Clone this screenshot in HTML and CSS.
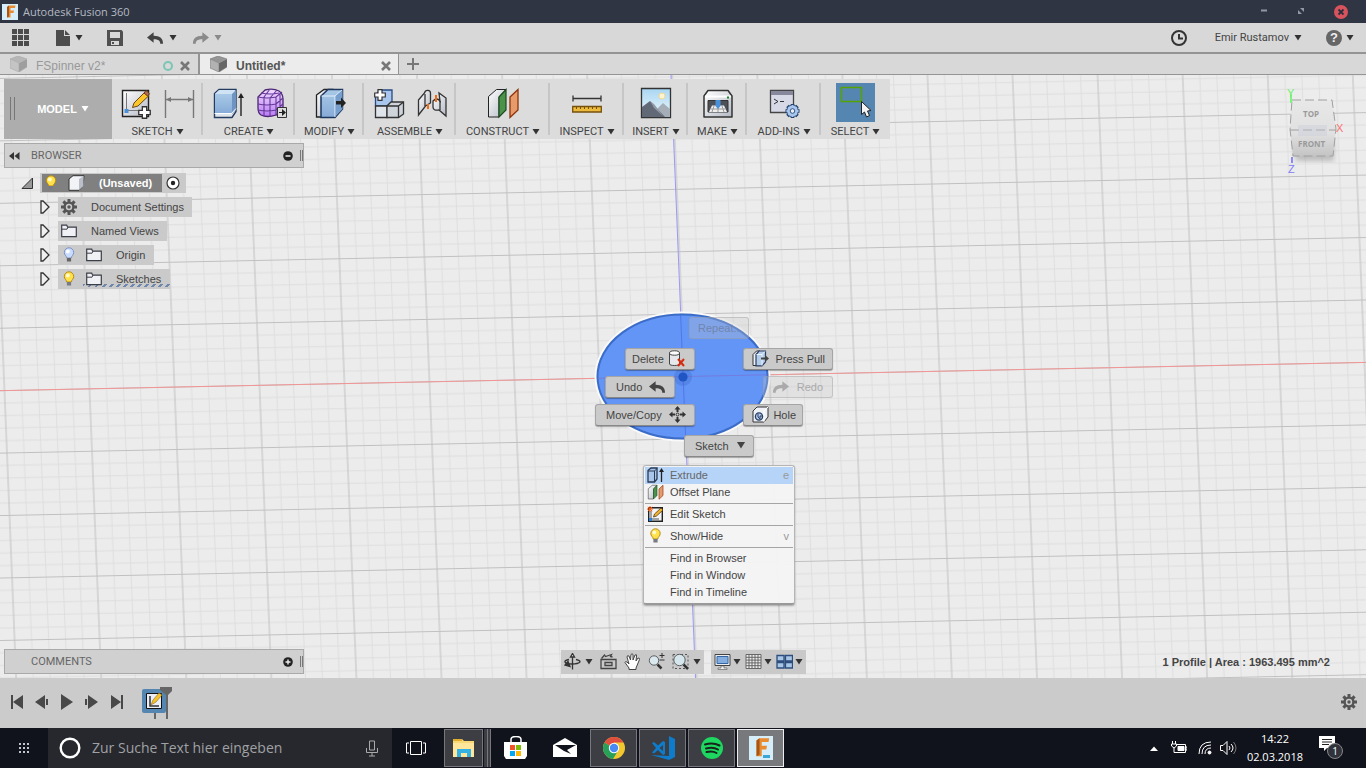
FILE: index.html
```
<!DOCTYPE html>
<html lang="en">
<head>
<meta charset="utf-8">
<title>Autodesk Fusion 360</title>
<link rel="stylesheet" href="styles.css">
</head>
<body>
<svg class="defs" aria-hidden="true">
  <defs>
    <linearGradient id="gBlue" x1="0" y1="0" x2="0" y2="1"><stop offset="0" stop-color="#a9c9e6"/><stop offset="1" stop-color="#86abd8"/></linearGradient>
    <linearGradient id="gGrey" x1="0" y1="0" x2="1" y2="1"><stop offset="0" stop-color="#ffffff"/><stop offset="1" stop-color="#b4b9c4"/></linearGradient>
    <linearGradient id="gPurple" x1="0" y1="0" x2="0" y2="1"><stop offset="0" stop-color="#f0dcff"/><stop offset="1" stop-color="#b87cf4"/></linearGradient>
    <linearGradient id="gSky" x1="0" y1="0" x2="0" y2="1"><stop offset="0" stop-color="#a9d6f2"/><stop offset="1" stop-color="#eef8fc"/></linearGradient>
    <linearGradient id="gCube" x1="0" y1="0" x2="0" y2="1"><stop offset="0" stop-color="#e8e8e8"/><stop offset=".6" stop-color="#e0e0e0"/><stop offset="1" stop-color="#c4c4c4"/></linearGradient>
    <filter id="soft"><feGaussianBlur stdDeviation="2.500"/></filter>
    <pattern id="grid" width="85" height="62.4" patternUnits="userSpaceOnUse" patternTransform="matrix(1 -0.0207 0.0406 1 640.7 271.2)">
      <path d="M8.5 0V62.4M25.5 0V62.4M59.5 0V62.4M76.5 0V62.4M0 6.2H85M0 18.7H85M0 43.7H85M0 56.2H85" stroke="#dedede" fill="none"/>
      <path d="M42.5 0V62.4M0 31.2H85" stroke="#c0c0c0" fill="none"/>
    </pattern>
    <symbol id="bulb" viewBox="0 0 12 16"><path d="M6 .8a4.7 4.7 0 0 0-4.700 4.700c0 2.500 2.200 3.300 2.500 5.500h4.400c.3-2.200 2.500-3 2.500-5.500A4.700 4.700 0 0 0 6 .8z" fill="#ffe14a" stroke="#b98a16"/><circle cx="4.800" cy="4.500" r="1.900" fill="#fffbd0"/><path d="M3.900 11h4.200v3.500H3.900z" fill="#777b84"/></symbol>
    <symbol id="bulbOff" viewBox="0 0 12 16"><path d="M6 .8a4.700 4.700 0 0 0-4.700 4.700c0 2.500 2.200 3.300 2.500 5.500h4.400c.3-2.200 2.500-3 2.500-5.500A4.700 4.700 0 0 0 6 .8z" fill="#c9dcff" stroke="#7c92bd"/><circle cx="4.800" cy="4.500" r="1.900" fill="#fff"/><path d="M3.900 11h4.200v3.500H3.900z" fill="#666"/></symbol>
    <symbol id="folder" viewBox="0 0 16 14"><path d="M.7 1.200h5l1 2h8.600v9.500H.7z" fill="#f0f1f4" stroke="#3b3f48" stroke-width="1.200"/><path d="M1 5.200h5l1-2" fill="none" stroke="#3b3f48"/></symbol>
    <symbol id="expand" viewBox="0 0 10 14"><path d="M1 1h2l6 6-6 6H1z" fill="#f0f0f0" stroke="#333" stroke-width="1.300"/></symbol>
    <symbol id="gear" viewBox="0 0 16 16"><g stroke="currentColor" stroke-width="3"><path d="M8 0v16M0 8h16M2.400 2.400l11.200 11.200M13.600 2.400L2.400 13.600"/></g><circle cx="8" cy="8" r="5.600" fill="currentColor"/><circle cx="8" cy="8" r="3.200" fill="#ccc"/><circle cx="8" cy="8" r="1.700" fill="currentColor"/></symbol>
    <symbol id="undo" viewBox="0 0 18 12"><path d="M0 5.500L7 0v3.600c7 0 10 3 10 8.400h-3c0-3-2-4.600-7-4.600V11z" fill="currentColor"/></symbol>
    <symbol id="redo" viewBox="0 0 18 12"><path d="M18 5.500L11 0v3.600c-7 0-10 3-10 8.400h3c0-3 2-4.600 7-4.600V11z" fill="currentColor"/></symbol>
    <symbol id="down" viewBox="0 0 8 6"><path d="M.5 0h7L4 5.500z" fill="currentColor"/></symbol>
    <symbol id="cube" viewBox="0 0 17 16"><path d="M0 3L8 0l9 3-8 4z" fill="#959595"/><path d="M0 3l9 4v9l-9-4z" fill="#b2b2b2"/><path d="M17 3L9 7v9l8-5z" fill="#666"/><path d="M0 3l9 4v9l-9-4zM0 3L8 0l9 3v8l-8 5" fill="none" stroke="#777" stroke-width=".6"/></symbol>
    <symbol id="close" viewBox="0 0 10 10"><path d="M1 1l8 8M9 1L1 9" stroke="currentColor" stroke-width="2.600"/></symbol>
    <symbol id="extrude" viewBox="0 0 32 32"><path d="M2.500 6.500L7 2.500h17v22l-4 6H2.500z" fill="#dfe3ea" stroke="#243c60" stroke-width="1.400"/><path d="M3 7h17v19H3z" fill="url(#gBlue)"/><path d="M3 7l4-4h16.500L20 7z" fill="#cfe3f5"/><path d="M20 7l4-4v20l-4 4z" fill="#6f94c4"/><path d="M2.500 26.500h17l4.500-5" fill="none" stroke="#fff"/><path d="M29 29V8" stroke="#222" stroke-width="1.400"/><path d="M26 11l3-5 3 5z" fill="#222"/></symbol>
    <symbol id="extrudeSmall" viewBox="0 0 17 16"><path d="M1 3.500L4 1h6v11l-2.500 3H1z" fill="#a9c6ea" stroke="#2a3a55" stroke-width="1.300"/><path d="M1 4h6.500v11M7.500 4L10 1.500" fill="none" stroke="#2a3a55"/><path d="M14.500 15V3" stroke="#222" stroke-width="1.300"/><path d="M12 5l2.500-4L17 5z" fill="#222"/></symbol>
    <symbol id="pressSmall" viewBox="0 0 17 17"><path d="M1 4.500L4.500 1H8L4.500 4.500v11H1z" fill="#eef1f5" stroke="#333"/><path d="M4 4.500L7 1h6.500v11L10 15.800H4z" fill="#b4cdeb" stroke="#2a3f62" stroke-width="1.200"/><path d="M4.500 4.500H10v11M10 4.500L13 1.500" fill="none" stroke="#eef5fc"/><path d="M9 7.500h4V5l4 3.500-4 3.500V9.500H9z" fill="#444"/></symbol>
    <symbol id="construct" viewBox="0 0 32 32"><path d="M1.500 9.500l8-7H19L12 10v20H1.500z" fill="url(#gGrey)" stroke="#222"/><path d="M12 10l7-7.500V23l-7 7z" fill="#4b934b" stroke="#1d4a22" stroke-width="1.200"/><path d="M23 10l8-7.500V23l-8 7.500z" fill="#e79a6b" stroke="#8d3309" stroke-width="1.300"/></symbol>
    <symbol id="sketch" viewBox="0 0 32 32"><path d="M2.500 3.500h26v26h-26z" fill="url(#gGrey)" stroke="#222" stroke-width="1.400"/><path d="M6.500 6v17.500H23" fill="none" stroke="#777"/><path d="M4.500 22h4v4h-4z" fill="#4a90d9"/><path d="M14 16L25 5l4 3.500L18 19l-5.500 1.500z" fill="#ffc629" stroke="#68471b"/><path d="M24 6l2-2.500 3.500 3.200-2 2.300z" fill="#b66c50" stroke="#613820"/></symbol>
    <symbol id="press" viewBox="0 0 32 32"><path d="M2.500 8L10 2.500h8L12 8v22H2.500z" fill="url(#gGrey)" stroke="#222" stroke-width="1.300"/><path d="M7 9l7-6.500h14.500V22L21 30.500H7z" fill="url(#gBlue)" stroke="#1d365e" stroke-width="1.500"/><path d="M7.500 9H21l7-6M21 9v21" stroke="#e4f1fb" fill="none"/><path d="M21.500 9l7-6v19l-7 7.500z" fill="#769fce"/></symbol>
    <symbol id="plus" viewBox="0 0 12 12"><path d="M4 .7h4V4h3.300v4H8v3.300H4V8H.7V4H4z" fill="#fff" stroke="#333" stroke-width="1.200"/></symbol>
    <symbol id="fusion" viewBox="0 0 16 16"><path d="M0 0h16v16H0z" fill="#d5eefa"/><path d="M5 3l2-1.500h6.500L13 4H8.500v2.500H12L11.500 9h-3v4.500H5z" fill="#e98b2e"/><path d="M5 3l2-1.500v11l-2 1z" fill="#a65717"/></symbol>
  </defs>
</svg>

<header class="titlebar">
  <svg class="logo"><use href="#fusion"/></svg>
  <h1>Autodesk Fusion 360</h1>
  <div class="window-controls">
    <button aria-label="Minimize"><svg width="8" height="12"><path d="M1 4.500h6" stroke="#9298a5" stroke-width="2"/></svg></button>
    <button aria-label="Restore"><svg width="8" height="12"><path d="M3 2h4v4zM1 4v4h4z" fill="#9298a5"/></svg></button>
    <button aria-label="Close"><svg width="14" height="14"><circle cx="7" cy="7" r="7" fill="#d9535c"/><path d="M4.500 4.500l5 5M9.500 4.500l-5 5" stroke="#2b3040" stroke-width="1.800"/></svg></button>
  </div>
</header>

<div class="quickbar">
  <button class="q-grid" aria-label="Data panel"><svg width="18" height="18" fill="#4c4c4c"><path d="M0 0h5v5H0zM6 0h5v5H6zM12 0h5v5h-5zM0 6h5v5H0zM6 6h5v5H6zM12 6h5v5h-5zM0 12h5v5H0zM6 12h5v5H6zM12 12h5v5h-5z"/></svg></button>
  <button class="q-file" aria-label="File"><svg width="14" height="16" fill="#4c4c4c"><path d="M0 0h8v6h6v10H0zM9 0l5 5H9z"/></svg><svg class="caret"><use href="#down"/></svg></button>
  <button class="q-save" aria-label="Save"><svg width="16" height="16"><path d="M0 0h14.500L16 1.500V16H0z" fill="#505050"/><path d="M3 2h10v6H3z" fill="#d8d8d8"/><path d="M4 11h8v4H4z" fill="#d8d8d8"/><path d="M5 12h2v2H5z" fill="#505050"/></svg></button>
  <button class="q-undo" aria-label="Undo"><svg width="17" height="12"><use href="#undo"/></svg><svg class="caret"><use href="#down"/></svg></button>
  <button class="q-redo" aria-label="Redo"><svg width="17" height="12"><use href="#redo"/></svg><svg class="caret"><use href="#down"/></svg></button>
  <div class="account">
    <button aria-label="Job status"><svg width="16" height="16" fill="none" stroke="#333" stroke-width="2"><circle cx="8" cy="8" r="7"/><path d="M8 4v4.500h4"/></svg></button>
    <button class="user">Emir Rustamov <svg class="caret"><use href="#down"/></svg></button>
    <button class="help" aria-label="Help"><span>?</span><svg class="caret"><use href="#down"/></svg></button>
  </div>
</div>

<nav class="tabs" aria-label="Documents">
  <div class="tab"><svg class="tab-cube faded"><use href="#cube"/></svg><a href="#">FSpinner v2*</a><i class="sync"></i><button aria-label="Close FSpinner"><svg width="10" height="10"><use href="#close"/></svg></button></div>
  <div class="tab active"><svg class="tab-cube"><use href="#cube"/></svg><a href="#">Untitled*</a><button aria-label="Close Untitled"><svg width="10" height="10"><use href="#close"/></svg></button></div>
  <button class="new-tab" aria-label="New tab"><svg width="12" height="12"><path d="M6 0v12M0 6h12" stroke="#777" stroke-width="2"/></svg></button>
</nav>

<main class="viewport">
  <svg class="canvas" viewBox="0 0 1366 603" preserveAspectRatio="xMidYMid slice" aria-hidden="true">
    <rect width="1366" height="603" fill="#ececec"/>
    <rect width="1366" height="603" fill="url(#grid)"/>
    <path d="M0 315.700L1366 287.400" stroke="#f29595"/>
    <path d="M671 0l24.500 603" stroke="#9b99f4"/>
    <ellipse cx="682.500" cy="301.500" rx="87" ry="64" fill="none" stroke="#fafafa" stroke-width="2"/>
    <ellipse cx="682.500" cy="301.500" rx="85" ry="62" fill="#5c90f7" stroke="#3a6cc8" stroke-width="2" fill-opacity=".95"/>
    <path d="M598 303.300l169-3.500" stroke="#7775d9" stroke-opacity=".7"/><path d="M680.600 240l5 123" stroke="#4d63e6" stroke-opacity=".6"/>
    <circle cx="683" cy="302" r="9" fill="#3b68cc" opacity=".35"/><circle cx="683" cy="302" r="4.600" fill="#2056c4"/>
  </svg>

  <div class="ribbon">
    <button class="workspace">MODEL <svg class="caret"><use href="#down"/></svg></button>
    <section class="group">
      <div class="tools">
        <button aria-label="Create sketch"><svg class="tool"><use href="#sketch"/><use href="#plus" x="18" y="19" width="13" height="13"/></svg></button>
        <button aria-label="Dimension"><svg class="tool" fill="none" stroke="#777"><path d="M2.500 3v28M30.500 3v28M3 12.500h27" stroke-width="1.400"/><path d="M3 12.500l5-2.500v5zM30 12.500L25 10v5z" fill="#777" stroke="none"/></svg></button>
      </div>
      <button class="label">SKETCH <svg class="caret"><use href="#down"/></svg></button>
    </section>
    <section class="group">
      <div class="tools">
        <button aria-label="Extrude"><svg class="tool"><use href="#extrude"/></svg></button>
        <button aria-label="Create form"><svg class="tool"><path d="M3 10l7-7q8-2 14 1 4 3 4 8v10l-7 6q-9 3-15 0-3-2-3-7z" fill="url(#gPurple)" stroke="#4c2672" stroke-width="1.300"/><path d="M3 10q9 2 18 0l6-5M21 10v19M9 10v19M15 11v19M3 17q9 2 18 0l7-6M3 23q9 2 18 0l7-6M9 10l6-8M15 11l7-8M6 6q9 2 18 0M25 7v18" fill="none" stroke="#653799" stroke-width="1.100"/><path d="M22.500 20.500h9v10h-9z" fill="#ddd" stroke="#333"/><path d="M24 25h3v-3l4 3.500-4 3.500v-3h-3z" fill="#222"/></svg></button>
      </div>
      <button class="label">CREATE <svg class="caret"><use href="#down"/></svg></button>
    </section>
    <section class="group">
      <div class="tools"><button aria-label="Press pull"><svg class="tool"><use href="#press"/><path d="M22 14h5v-3.500l5 5.500-5 5v-3.500h-5z" fill="#222"/></svg></button></div>
      <button class="label">MODIFY <svg class="caret"><use href="#down"/></svg></button>
    </section>
    <section class="group">
      <div class="tools">
        <button aria-label="New component"><svg class="tool" stroke="#333" stroke-width="1.300"><path d="M2.500 8L7 3h12v12l-5 4H2.500z" fill="#a9c6ee" stroke="#274a83"/><path d="M2.500 19H14v11.500H2.500z" fill="#dfe3ea"/><path d="M14 19l4-4h12.500v12l-5 3.500H14z" fill="#cfd3da"/><path d="M14 19h11.500v11.500M25.500 19l5-4" fill="none"/><use href="#plus" x="1" y="2" width="12" height="12"/></svg></button>
        <button aria-label="Joint"><svg class="tool" stroke="#333" stroke-width="1.300"><path d="M2.500 13l6-7c1-4 6-3 6 0v10l-5 3-7 9z" fill="url(#gGrey)"/><path d="M9 7v12" fill="none"/><path d="M12 17v5" stroke="#f06b12" stroke-width="2"/><path d="M17 14q4-4 7 0l-1-8 7 5v18l-7-6q-6 1-6-3z" fill="url(#gGrey)"/><path d="M24 14v9" fill="none"/><path d="M20 8v7" stroke="#f06b12" stroke-width="2"/></svg></button>
      </div>
      <button class="label">ASSEMBLE <svg class="caret"><use href="#down"/></svg></button>
    </section>
    <section class="group">
      <div class="tools"><button aria-label="Offset plane"><svg class="tool"><use href="#construct"/></svg></button></div>
      <button class="label">CONSTRUCT <svg class="caret"><use href="#down"/></svg></button>
    </section>
    <section class="group">
      <div class="tools"><button aria-label="Measure"><svg class="tool"><path d="M2 11.500h28M2 8.500v6M30 8.500v6" stroke="#333" stroke-width="1.300"/><path d="M1.700 19.500h28.600v5.500H1.700z" fill="#edbb3c" stroke="#76500d" stroke-width="1.300"/><path d="M5.500 20v2M9.500 20v2M13.500 20v2M17.500 20v2M21.500 20v2M25.500 20v2" stroke="#76500d"/></svg></button></div>
      <button class="label">INSPECT <svg class="caret"><use href="#down"/></svg></button>
    </section>
    <section class="group">
      <div class="tools"><button aria-label="Insert image"><svg class="tool"><path d="M1.500 1.500h29v29h-29z" fill="url(#gSky)" stroke="#333" stroke-width="1.300"/><circle cx="22" cy="9" r="3" fill="#fff4cb" stroke="#f3d794"/><path d="M15 24l8-8 7 6v8H15z" fill="#a5adb7"/><path d="M2 20l8-6 15 16H2z" fill="#626976"/><path d="M10 14l4 7 9 8-9-12z" fill="#929aa6"/></svg></button></div>
      <button class="label">INSERT <svg class="caret"><use href="#down"/></svg></button>
    </section>
    <section class="group">
      <div class="tools"><button aria-label="3D print"><svg class="tool"><path d="M2 9l4-5.500h20L30 9v21H2z" fill="url(#gGrey)" stroke="#333" stroke-width="1.500" stroke-linejoin="round"/><path d="M3 9.500h26" stroke="#fff" stroke-width="2"/><path d="M6 13.500h20V25H6z" fill="#4c5058" stroke="#333"/><path d="M10 18.500h12l3 6.500H7z" fill="#eee"/><path d="M12 19l-2 6M16 19v6M20 19l2 6M8.500 22h15" stroke="#999"/><path d="M13.500 13h5v6L16 22l-2.500-3z" fill="#4a90d9"/><path d="M25 9.500h2v2h-2z" fill="#188a25"/></svg></button></div>
      <button class="label">MAKE <svg class="caret"><use href="#down"/></svg></button>
    </section>
    <section class="group">
      <div class="tools"><button aria-label="Scripts"><svg class="tool"><path d="M2.500 3.500h23v22h-23z" fill="#d7dae6" stroke="#444" stroke-width="1.300"/><path d="M3 4h22v4H3z" fill="#88889c"/><path d="M6 12l4 2.500L6 17M12 14.500h4" stroke="#333" fill="none"/><g transform="translate(24.500 24)"><path d="M0-7V7M-7 0H7M-5-5L5 5M5-5L-5 5" stroke="#233e67" stroke-width="3.600"/><circle r="5.800" fill="#a9c6ee" stroke="#315687"/><path d="M0-6V6M-6 0H6M-4-4L4 4M4-4L-4 4" stroke="#a9c6ee" stroke-width="2"/><circle r="2.300" fill="#eee" stroke="#315687"/></g></svg></button></div>
      <button class="label">ADD-INS <svg class="caret"><use href="#down"/></svg></button>
    </section>
    <section class="group">
      <div class="tools"><button class="selected" aria-label="Select"><svg width="39" height="39"><path d="M5.500 4.500h20v14h-20z" fill="none" stroke="#56a200" stroke-width="1.600"/><path d="M25.500 18.500v13l3-2.500 2 5 3-1.500-2-4.500 3.500-.5z" fill="#f4f4f4" stroke="#222"/></svg></button></div>
      <button class="label">SELECT <svg class="caret"><use href="#down"/></svg></button>
    </section>
  </div>

  <div class="middle">
    <aside class="browser">
      <div class="panel-head">
        <button aria-label="Collapse browser"><svg width="11" height="8" fill="#333"><path d="M5 0v8L0 4zM10.500 0v8l-5-4z"/></svg></button>
        <h2>BROWSER</h2>
        <button aria-label="Minimize browser"><svg width="10" height="10"><circle cx="5" cy="5" r="4.800" fill="#222"/><path d="M2.500 5h5" stroke="#eee" stroke-width="1.500"/></svg></button><i class="grip"></i>
      </div>
      <ul class="tree">
        <li class="root"><svg width="12" height="12"><path d="M1 11.500h10.500V1z" fill="#999" stroke="#333"/></svg><div class="node"><span class="name"><svg width="12" height="16"><use href="#bulb"/></svg><svg width="17" height="16"><path d="M1 4l4-3.300h11L15 11l-4 4.300H1z" fill="#f1f3f7" stroke="#333"/><path d="M11 4l4.500-3v10L11 15z" fill="#b9bec9"/></svg><b>(Unsaved)</b></span><svg width="14" height="14"><circle cx="7" cy="7" r="6" fill="#fff" stroke="#333" stroke-width="1.200"/><circle cx="7" cy="7" r="2.200" fill="#222"/></svg></div></li>
        <li><svg width="10" height="14"><use href="#expand"/></svg><div class="node"><svg class="dark" width="16" height="16"><use href="#gear"/></svg><span>Document Settings</span></div></li>
        <li><svg width="10" height="14"><use href="#expand"/></svg><div class="node"><svg width="16" height="14"><use href="#folder"/></svg><span>Named Views</span></div></li>
        <li class="lit"><svg width="10" height="14"><use href="#expand"/></svg><div class="node"><svg width="12" height="16"><use href="#bulbOff"/></svg><svg width="16" height="14"><use href="#folder"/></svg><span>Origin</span></div></li>
        <li class="lit"><svg width="10" height="14"><use href="#expand"/></svg><div class="node hatched"><svg width="12" height="16"><use href="#bulb"/></svg><svg width="16" height="14"><use href="#folder"/></svg><span>Sketches</span></div></li>
      </ul>
    </aside>
  </div>

  <svg class="viewcube" width="70" height="96" role="img" aria-label="View cube">
    <path d="M20 66l40-8v20H22z" fill="#777" opacity=".4" filter="url(#soft)"/>
    <path d="M18 17h40l4 29-3 27H19l-3-27z" fill="url(#gCube)"/>
    <path d="M18 17h40l4 29-3 27H19l-3-27zM16 47h46" fill="none" stroke="#a0a0a0" stroke-dasharray="9 4"/>
    <path d="M24 42h29v11H24z" fill="#c3c9d8" opacity=".35"/>
    <text x="29" y="34" class="face">TOP</text><text x="24" y="64" class="face">FRONT</text>
    <path d="M17 11v9" stroke="#7bf57b" stroke-width="2"/><path d="M18 74v6" stroke="#8a8af5" stroke-width="2"/>
    <text x="13" y="14" class="axis y">Y</text><text x="62" y="49" class="axis x">X</text><text x="14" y="90" class="axis z">Z</text>
  </svg>

  <div class="marking">
    <button class="mark repeat" disabled>Repeat...</button>
    <button class="mark delete">Delete <svg width="18" height="17"><path d="M1.500 3v11c0 2 10 2 10 0V3" fill="#e6e8ec" stroke="#444"/><ellipse cx="6.500" cy="3" rx="5" ry="2.200" fill="#fff" stroke="#444"/><path d="M10 9l6 7M16 9l-6 7" stroke="#d42c10" stroke-width="2"/></svg></button>
    <button class="mark undo">Undo <svg width="17" height="12"><use href="#undo"/></svg></button>
    <button class="mark move">Move/Copy <svg width="17" height="17" fill="#333"><path d="M8.500 0l3 3.500h-2V6h-2V3.500h-2zM8.500 17l3-3.500h-2V11h-2v2.500h-2zM0 8.500l3.500-3v2H6v2H3.500v2zM17 8.500l-3.500-3v2H11v2h2.500v2z"/><circle cx="8.500" cy="8.500" r="1.500" fill="#ccc" stroke="#333"/></svg></button>
    <button class="mark press"><svg width="17" height="17"><use href="#pressSmall"/></svg> Press Pull</button>
    <button class="mark redo" disabled><svg width="17" height="12"><use href="#redo"/></svg> Redo</button>
    <button class="mark hole"><svg width="17" height="17"><path d="M1 5l4-4h11v10l-4 5H1z" fill="#eef1f6" stroke="#333"/><path d="M12 5l4-4M12 5v11" stroke="#fff"/><circle cx="7" cy="10.500" r="3.600" fill="#b7c8e6" stroke="#263f67" stroke-width="1.300"/><path d="M6 8v3l2 2v-3h2" fill="none" stroke="#263f67"/></svg> Hole</button>
    <button class="mark sketch">Sketch <svg width="10" height="7"><use href="#down"/></svg></button>
    <ul class="context">
      <li class="hover"><button><svg width="17" height="16"><use href="#extrudeSmall"/></svg><span>Extrude</span><kbd>e</kbd></button></li>
      <li><button><svg width="17" height="16"><use href="#construct"/></svg><span>Offset Plane</span></button></li>
      <li class="rule"><button><svg width="17" height="16"><path d="M1.700 1.700h13.600v13.600H1.700z" fill="#f4f4f6" stroke="#222" stroke-width="1.400"/><path d="M4 5v8h8" fill="none" stroke="#555"/><path d="M2 12h3v3H2z" fill="#2f7ed8"/><path d="M6.500 11l1-3L14 2l2 2-6.500 6z" fill="#f3b32b" stroke="#4d3717" stroke-width=".8"/><path d="M0 3h6M3 0v6M.8.8l4.400 4.400M5.200.8L.8 5.200" stroke="#f25a14"/></svg><span>Edit Sketch</span></button></li>
      <li class="rule"><button><svg width="17" height="16"><use href="#bulb"/></svg><span>Show/Hide</span><kbd>v</kbd></button></li>
      <li class="rule"><button><i></i><span>Find in Browser</span></button></li>
      <li><button><i></i><span>Find in Window</span></button></li>
      <li><button><i></i><span>Find in Timeline</span></button></li>
    </ul>
  </div>

  <div class="bottom">
    <div class="panel-head comments">
      <h2>COMMENTS</h2>
      <button aria-label="Expand comments"><svg width="10" height="10"><circle cx="5" cy="5" r="4.800" fill="#222"/><path d="M2.500 5h5M5 2.500v5" stroke="#eee" stroke-width="1.400"/></svg></button><i class="grip"></i>
    </div>
    <div class="navbars">
      <div class="navbar">
        <button aria-label="Orbit"><svg width="17" height="17" fill="none" stroke="#333" stroke-width="1.300"><path d="M8.500 16.500V4"/><path d="M6.500 4l2-3.500 2 3.500z" fill="#eee"/><path d="M5 6.500C-1.500 7.500 0 11 8 11s11-3 4-4.500"/><path d="M4 8.500L1 12l5 1.500z" fill="#333"/></svg><svg class="caret"><use href="#down"/></svg></button>
        <button aria-label="Look at"><svg width="17" height="17" fill="none" stroke="#444" stroke-width="1.300"><path d="M1 6.500h15v9H1zM5 9.500h7v3H5z"/><path d="M1.500 5.500l3-3.500 1 1.500 6-2-1 2 2 .5"/></svg></button>
        <button aria-label="Pan"><svg width="17" height="17"><path d="M5 15L1 9.500q0-1.500 2-.5l2 2L3 4q0-2 2-1l1.500 4L7 1.500q1-1.500 2 0V7l2-5q2-1 1.500 1L12 8l2-3q2 0 1.500 1.500L12 15v1.500H5z" fill="#fff" stroke="#444"/></svg></button>
        <button aria-label="Zoom"><svg width="17" height="17"><circle cx="6" cy="7.500" r="4.700" fill="#d9e9ee" stroke="#5b5f63"/><path d="M9.500 11.500l4 4" stroke="#333" stroke-width="2.500"/><path d="M14 0v5M11.500 2.500h5M11.500 7h5" stroke="#333"/></svg></button>
        <button aria-label="Fit"><svg width="17" height="17"><path d="M1 1.500h15v14H1z" fill="none" stroke="#555" stroke-dasharray="2 2"/><circle cx="7.500" cy="7" r="5.700" fill="#d5e7ec" stroke="#5b5f63"/><path d="M11.500 11.500l4.500 4.500" stroke="#333" stroke-width="2.500"/></svg><svg class="caret"><use href="#down"/></svg></button>
      </div>
      <div class="navbar display">
        <button aria-label="Display settings"><svg width="17" height="17"><path d="M1 1.500h15v11H1z" fill="#eee" stroke="#444"/><path d="M3 3.500h11v7H3z" fill="#85ade0" stroke="#3266a5"/><path d="M7 13h3v2h3v1.500H4V15h3z" fill="#eee" stroke="#555" stroke-width=".6"/></svg><svg class="caret"><use href="#down"/></svg></button>
        <button aria-label="Grid settings"><svg width="17" height="17" stroke="#666" fill="#eee"><path d="M1 1.500h15v14H1z"/><path d="M4 1v15M7 1v15M10 1v15M13 1v15M1 4.300h15M1 7.100h15M1 9.900h15M1 12.700h15"/></svg><svg class="caret"><use href="#down"/></svg></button>
        <button aria-label="Viewports"><svg width="17" height="17" fill="#a8c6e6" stroke="#2d4d7c" stroke-width="1.300"><path d="M1 2.500h7v5.500H1zM9.500 2.500h7v5.500h-7zM1 9.500h7V15H1zM9.500 9.500h7V15h-7z"/></svg><svg class="caret"><use href="#down"/></svg></button>
      </div>
    </div>
    <p class="status">1 Profile | Area : 1963.495 mm^2</p>
  </div>
</main>

<footer class="timeline">
  <div class="playback">
    <button aria-label="First"><svg width="14" height="16"><path d="M1 1h2v14H1zM13 1v14L3 8z"/></svg></button>
    <button aria-label="Previous"><svg width="14" height="16"><path d="M10 1v14L0 8zM11 5h2v6h-2z"/></svg></button>
    <button aria-label="Play"><svg width="14" height="16"><path d="M1 0l12 8-12 8z"/></svg></button>
    <button aria-label="Next"><svg width="14" height="16"><path d="M3 1v14l10-7zM0 5h2v6H0z"/></svg></button>
    <button aria-label="Last"><svg width="14" height="16"><path d="M11 1h2v14h-2zM1 1v14l10-7z"/></svg></button>
  </div>
  <button class="feature" aria-label="Sketch1"><svg width="32" height="34"><rect y="3" width="24" height="24" rx="2" fill="#5486b1"/><path d="M4.500 7.500h15v15h-15z" fill="#e9eef8" stroke="#111"/><path d="M8 10v10h9" fill="none" stroke="#333" stroke-width="1.500"/><path d="M9 19l2-5 6-7 3 2-6 7z" fill="#f5c12c" stroke="#8a681b" stroke-width=".6"/><path d="M12 27h2v6h-2z" fill="#666"/><path d="M18 1h12v4l-4 4v24h-2V9l-6-5z" fill="#666"/></svg></button>
  <button class="settings" aria-label="Settings"><svg width="16" height="16"><use href="#gear"/></svg></button>
</footer>

<footer class="taskbar">
  <button class="start" aria-label="Start"><svg width="11" height="11" fill="#c2c4c9"><path d="M0 0h2v2H0zM4 0h2v2H4zM8 0h2v2H8zM0 4h2v2H0zM4 4h2v2H4zM8 4h2v2H8zM0 8h2v2H0zM4 8h2v2H4zM8 8h2v2H8z"/></svg></button>
  <label class="search"><svg width="22" height="22"><circle cx="11" cy="11" r="9.300" fill="none" stroke="#fff" stroke-width="2.400"/></svg><input type="text" placeholder="Zur Suche Text hier eingeben" aria-label="Suche"><svg width="12" height="17" fill="none" stroke="#aaa"><path d="M3.500 1h5v9h-5zM.5 8v4.500h11V8M6 12.500V16M3 16h6"/></svg></label>
  <button class="app" aria-label="Task view"><svg width="20" height="14" fill="none" stroke="#fff"><path d="M4.500.5h11v13h-11zM3 2H.5v10H3M17 2h2.500v10H17"/></svg></button>
  <button class="app open stack" aria-label="Explorer"><svg width="22" height="18"><path d="M0 0h9l2 2h10v16H0z" fill="#f9d975"/><path d="M0 0h9v2H0z" fill="#e2ae31"/><path d="M0 4h21v14H0z" fill="#ffe69b"/><path d="M4 10h14v8h-4v-4H8v4H4z" fill="#33b1e5"/></svg></button>
  <button class="app" aria-label="Store"><svg width="24" height="24"><path d="M7 8V3.500q0-3 5-3t5 3V8" fill="none" stroke="#fff" stroke-width="1.500"/><path d="M0 6h23v14l-2 3H2l-2-3z" fill="#fff"/><path d="M6 9h5v5H6z" fill="#f35325"/><path d="M12 9h5v5h-5z" fill="#81bc06"/><path d="M6 15h5v5H6z" fill="#05a6f0"/><path d="M12 15h5v5h-5z" fill="#ffba08"/></svg></button>
  <button class="app" aria-label="Mail"><svg width="24" height="20"><path d="M0 7l12-7 12 7v12H0z" fill="#fff"/><path d="M2 7h21l-9 5 4 4-7-3z" fill="#11141c"/></svg></button>
  <button class="app open" aria-label="Chrome"><svg width="22" height="22" viewBox="0 0 22 22"><circle cx="11" cy="11" r="11" fill="#f3c72e"/><path d="M11 11L1.500 5.500A11 11 0 0 0 10 22l5.500-9z" fill="#28a05a"/><path d="M11 11L1.500 5.500A11 11 0 0 1 20.500 5.500H11z" fill="#df4e3e"/><circle cx="11" cy="11" r="5.200" fill="#fff"/><circle cx="11" cy="11" r="4.200" fill="#4a8af5"/></svg></button>
  <button class="app open" aria-label="Visual Studio Code"><svg width="24" height="24" fill="#0e7cca"><path d="M18 0l6 3v18l-6 3-18-5 18 1z"/><path d="M1 7l2-1 4 3.500L12 5l2 1v12l-2 1-5-5-4 3.500-2-1L5 12zm11 2l-3.500 3 3.500 3z" fill-rule="evenodd"/></svg></button>
  <button class="app open" aria-label="Spotify"><svg width="22" height="22"><circle cx="11" cy="11" r="11" fill="#1ed760"/><path d="M4 7.500q8-2.500 14.500 1M5 11.500q7-2 12 1M5.500 15q6-1.500 10 1" fill="none" stroke="#17231b" stroke-width="2" stroke-linecap="round"/></svg></button>
  <button class="app open current" aria-label="Fusion 360"><svg width="24" height="24"><use href="#fusion"/><path d="M14 19h7v3h-7z" fill="#3aa6d8"/></svg></button>
  <div class="tray">
    <svg width="8" height="5"><path d="M0 5l4-4.500L8 5z" fill="#fff"/></svg>
    <svg width="16" height="14" fill="none" stroke="#fff"><path d="M6 3.500h8.500v8H5M14.500 6H16v3h-1.500"/><path d="M7 5.500h6v4H7z" fill="#fff"/><path d="M1.500 0v3M4.500 0v3M.5 3h5v2L3 7 .5 5zM3 7v4.500h2"/></svg>
    <svg width="14" height="14" fill="none" stroke="#fff"><path d="M1 13Q1 1 13 1M4 13q0-9 9-9M7 13q0-6 6-6"/><circle cx="11.500" cy="11.500" r="1.500" fill="#fff"/></svg>
    <svg width="17" height="14" fill="none" stroke="#fff"><path d="M.5 4.500H3l4-4v13l-4-4H.5zM9 5q2 2 0 4M11 3q4 4 0 8"/><path d="M13.500 1q5 6 0 12" stroke="#777"/></svg>
    <time>14:22<br>02.03.2018</time>
    <button class="notify" aria-label="Notifications"><svg width="16" height="16"><path d="M0 0h16v12H8l-3 3v-3H0z" fill="#fff"/><path d="M3 3.500h10M3 6h10M3 8.500h7" stroke="#222"/></svg><span>1</span></button>
  </div>
</footer>
</body>
</html>
```
FILE: styles.css
```
* { box-sizing: border-box; }
body { margin: 0; height: 100vh; display: flex; flex-direction: column; overflow: hidden; font: 11px/14px "Liberation Sans", Arial, sans-serif; color: #444; background: #ececec; }
button { margin: 0; padding: 0; border: 0; background: none; font: inherit; color: inherit; display: flex; align-items: center; justify-content: center; }
h1, h2, p, ul { margin: 0; padding: 0; font-size: inherit; font-weight: normal; list-style: none; }
a { color: inherit; text-decoration: none; }
svg { flex: none; }
.defs { position: absolute; width: 0; height: 0; }
.caret { width: 8px; height: 6px; color: #333; }

.titlebar { height: 23px; flex: none; display: flex; align-items: center; padding: 0 18px 0 2px; background: #2f3542; }
.logo { width: 16px; height: 16px; }
.titlebar h1 { margin-left: 5px; font: 11px/16px "Open Sans", "Noto Sans", sans-serif; color: #b4bac4; }
.window-controls { margin-left: auto; display: flex; gap: 29px; align-items: center; height: 20px; }

.quickbar { height: 29px; flex: none; display: flex; align-items: center; padding: 0 12px; background: #d8d8d8; color: #444; font-family: Roboto, sans-serif; }
.quickbar button { gap: 5px; }
.q-file { margin-left: 26px; }
.q-save { margin-left: 24px; }
.q-undo { margin-left: 24px; }
.q-redo { margin-left: 15px; }
.q-redo, .q-redo .caret { color: #8a8a8a; }
.account { margin-left: auto; display: flex; align-items: center; gap: 24px; }
.account .user { margin-left: 4px; }
.help span { width: 16px; height: 16px; border-radius: 8px; background: #666; color: #eee; font: bold 13px/16px "Liberation Sans", sans-serif; }
.quickbar .help { gap: 4px; }

.tabs { height: 23px; flex: none; display: flex; border-top: 2px solid #949494; border-bottom: 1px solid #949494; background: #d8d8d8; color: #666; font-size: 12px; }
.tab { width: 199px; display: flex; align-items: center; padding: 0 8px 0 10px; border-right: 1px solid #949494; }
.tab a { margin: 4px auto 0 9px; color: #999; }
.tab.active { background: #ececec; border-left: 1px solid #949494; width: 200px; padding-right: 7px; }
.tab.active a { color: #555; font-weight: bold; }
.tab button { color: #777; margin-top: 3px; }
.tab-cube { width: 17px; height: 16px; }
.faded { opacity: .5; }
.sync { width: 10px; height: 10px; border: 2px solid #7cc5b4; border-radius: 50%; margin: 3px 7px 0 0; }
.new-tab { margin-left: 8px; }

.viewport { flex: 1; min-height: 0; position: relative; display: flex; flex-direction: column; align-items: stretch; padding: 4px; }
.canvas { position: absolute; inset: 0; width: 100%; height: 100%; }
.ribbon { position: relative; align-self: flex-start; display: grid; grid-template-columns: 108px 91px 92px 69px 92px 94px 74px 64px 59px 74px 69px; height: 60px; background: #dcdcdc; font-family: Roboto, sans-serif; }
.workspace { background: linear-gradient(#777, #777) 6px 18px / 1px 23px no-repeat, linear-gradient(#777, #777) 10px 18px / 1px 23px no-repeat, #adadad; color: #fff; font: bold 11px/14px "Liberation Sans", sans-serif; gap: 4px; padding-left: 10px; }
.workspace .caret { color: #fff; }
.group { display: flex; flex-direction: column; align-items: center; padding-top: 4px; background: linear-gradient(#c6c6c6, #c6c6c6) 100% 4px / 2px 52px no-repeat; }
.group:last-child { background: none; }
.tools { display: flex; align-items: center; gap: 11px; height: 39px; }
.tool { width: 32px; height: 32px; }
.selected { background: #5486b1; }
.label { gap: 3px; height: 17px; padding-top: 2px; }

.middle { position: relative; flex: 1; margin-top: 4px; }
.browser { width: 300px; }
.panel-head { height: 25px; display: flex; align-items: center; padding: 0 0 0 4px; border: 1px solid #a9a9a9; background: #d0d0d0; font-family: Roboto, sans-serif; color: #666; }
.panel-head h2 { margin: 0 auto 0 11px; }
.grip { width: 3px; height: 11px; margin-left: 7px; border: 1px solid #777; border-width: 0 1px; }
.tree { margin-top: 5px; display: grid; gap: 4px; }
.tree li { display: flex; align-items: center; height: 20px; padding-left: 36px; gap: 8px; }
.tree .root { padding-left: 17px; gap: 7px; }
.node { height: 20px; display: flex; align-items: center; background: #cacaca; padding: 0 8px 0 3px; gap: 14px; }
.lit .node { gap: 11px; padding: 0 9px 0 5px; }
.lit .node span { margin-left: 3px; }
.root .node { padding: 0 6px 0 2px; gap: 4px; }
.name { height: 18px; padding: 0 10px 0 3px; background: #808080; color: #fff; display: flex; align-items: center; gap: 11px; }
.name b { margin-left: 3px; }
.hatched { background: repeating-linear-gradient(135deg, #6f86ad 0 2px, transparent 2px 5px) 25px 15px / 87px 3px no-repeat, #cacaca; }
.dark { color: #555; }

.viewcube { position: absolute; top: 8px; right: 22px; }
.face { font: bold 8px "Open Sans", sans-serif; fill: #9a9a9a; }
.axis { font: 11px "Liberation Sans", sans-serif; }
.axis.x { fill: #ff7070; }
.axis.y { fill: #72f072; }
.axis.z { fill: #8080f5; }

.marking { position: absolute; left: 50%; top: 50%; width: 0; height: 0; }
.mark { position: absolute; height: 22px; white-space: nowrap; border: 1px solid #a5a5a5; border-bottom-color: #888; border-radius: 3px; background: #cacaca; box-shadow: 0 1px 1px rgba(0, 0, 0, .3); color: #444; justify-content: space-between; padding: 0 8px; }
.mark:disabled { background: rgba(200, 200, 200, .3); border-color: rgba(150, 150, 150, .4); color: #aaa; box-shadow: none; }
.repeat { left: 6px; top: -60px; width: 60px; }
.mark.repeat { color: #7185ae; }
.delete { left: -58px; top: -29px; width: 70px; padding-left: 6px; }
.undo { left: -78px; top: -1px; width: 70px; padding-left: 10px; }
.move { left: -88px; top: 27px; width: 100px; padding-left: 10px; }
.press { left: 60px; top: -29px; width: 90px; padding-right: 7px; }
.redo { left: 80px; top: -1px; width: 70px; padding-right: 9px; }
.hole { left: 60px; top: 27px; width: 60px; padding-right: 6px; }
.sketch { left: 1px; top: 58px; width: 70px; padding: 0 7px 0 10px; }
.context { position: absolute; left: -40px; top: 88px; width: 152px; padding: 1px 1px 2px; border: 1px solid #b5b5b5; border-bottom: 2px solid #999; border-radius: 3px; background: rgba(244, 244, 244, .95); box-shadow: 0 1px 2px rgba(0, 0, 0, .3); }
.context button { width: 100%; height: 17px; justify-content: flex-start; gap: 6px; padding: 0 4px 0 2px; white-space: nowrap; }
.context button svg, .context button i { width: 17px; }
.context kbd { margin-left: auto; font: inherit; color: #999; }
.context .hover { background: #b5d4f7; color: #666; }
.context .rule { margin-top: 2px; padding-top: 2px; border-top: 1px solid #a5a5a5; }

.bottom { position: relative; display: grid; grid-template-columns: 1fr auto 1fr; align-items: center; }
.comments { width: 300px; padding-left: 15px; }
.navbars { display: flex; gap: 7px; }
.navbar { height: 24px; display: flex; align-items: center; gap: 7px; padding: 0 3px; background: #c9c9c9; }
.navbar button { gap: 4px; }
.navbar.display { gap: 4px; }
.navbar.display button { gap: 2px; }
.status { justify-self: end; padding-right: 32px; font-weight: bold; }

.timeline { height: 50px; flex: none; display: flex; align-items: center; padding: 0 9px 2px 10px; background: #cbcbcb; color: #555; }
.playback { display: flex; gap: 11px; fill: #484848; }
.feature { margin: 2px 0 0 18px; }
.settings { margin-left: auto; }

.taskbar { height: 40px; flex: none; display: flex; align-items: center; background: #10131b; color: #fff; }
.start { width: 48px; height: 40px; }
.search { width: 344px; height: 40px; display: flex; align-items: center; padding: 0 14px 0 11px; gap: 11px; background: #26282d; }
.search input { flex: 1; min-width: 0; padding: 0; border: 0; background: none; font: 14px/20px "Open Sans", "Noto Sans", sans-serif; }
.search input::placeholder { color: #a0a1a4; opacity: 1; }
.app { width: 47px; height: 38px; margin-right: 2px; }
.open { background: #3c3e44; border: 1px solid #76787d; }
.stack { width: 39px; margin: 0 9px 0 3px; box-shadow: 1px 0 #10131b, 4px 0 #3c3e44, 5px 0 #76787d, 7px 0 #3c3e44, 8px 0 #76787d; }
.current { background: #77797d; border-color: #eee; }
.tray { margin-left: auto; padding-right: 22px; display: flex; align-items: center; gap: 10px; }
.tray > svg:first-child { margin-right: 3px; }
.tray > svg:nth-child(3) { margin: 0 -2px 0 1px; }
.tray time { font: 11px/18px "Open Sans", "Noto Sans", sans-serif; text-align: center; }
.notify { position: relative; margin-left: 6px; width: 25px; height: 24px; align-items: flex-start; justify-content: flex-start; }
.notify span { position: absolute; left: 8px; top: 7px; width: 16px; height: 16px; border: 1px solid #888; border-radius: 50%; background: #30333b; font: 10px/14px "Open Sans", sans-serif; text-align: center; }
```
